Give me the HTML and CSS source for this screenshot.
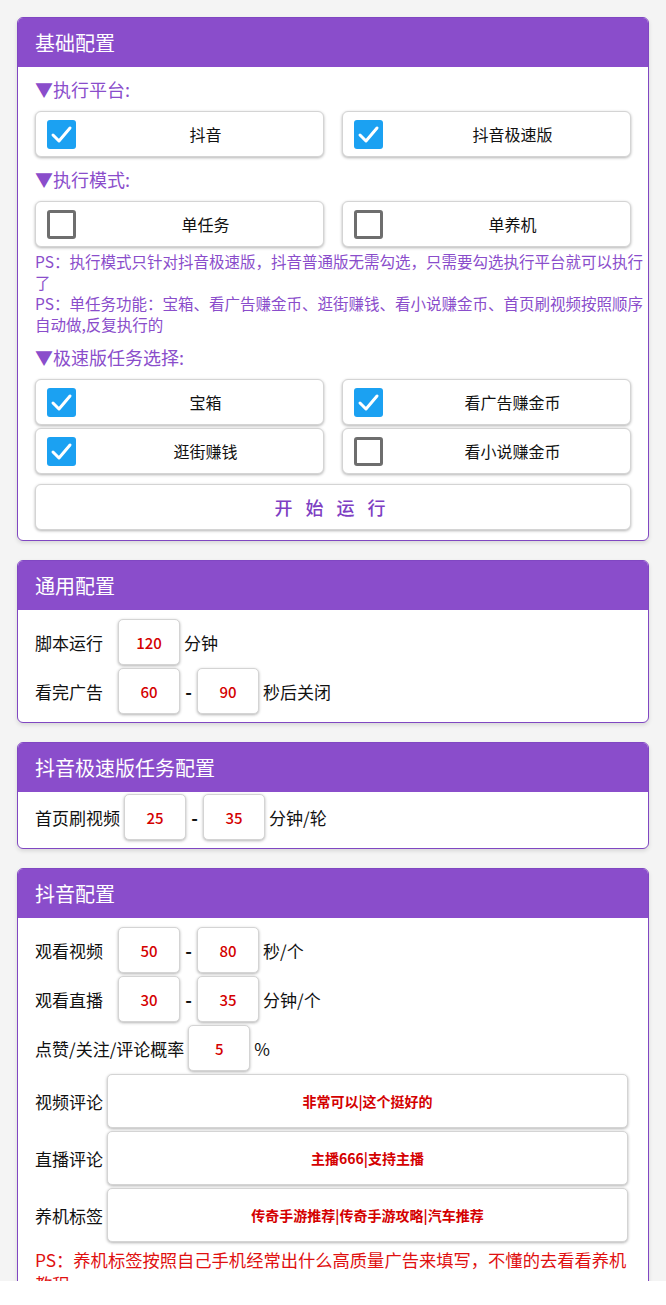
FILE: index.html
```html
<!DOCTYPE html>
<html lang="zh-CN">
<head>
  <meta charset="UTF-8">
  <title>配置</title>
  <link rel="stylesheet" href="styles.css">
</head>
<body>
<div class="page">

  <section class="card">
    <h2 class="card-head">基础配置</h2>
    <div class="card-body">
      <div class="group-title">▼执行平台:</div>
      <div class="check-grid">
        <label class="check-item"><span class="tick on"><svg viewBox="0 0 29 29"><polyline points="6,15 12,21 23,8"/></svg></span><span class="check-text">抖音</span></label>
        <label class="check-item"><span class="tick on"><svg viewBox="0 0 29 29"><polyline points="6,15 12,21 23,8"/></svg></span><span class="check-text">抖音极速版</span></label>
      </div>

      <div class="group-title">▼执行模式:</div>
      <div class="check-grid">
        <label class="check-item"><span class="tick"></span><span class="check-text">单任务</span></label>
        <label class="check-item"><span class="tick"></span><span class="check-text">单养机</span></label>
      </div>
      <p class="note">PS：执行模式只针对抖音极速版，抖音普通版无需勾选，只需要勾选执行平台就可以执行了</p>
      <p class="note">PS：单任务功能：宝箱、看广告赚金币、逛街赚钱、看小说赚金币、首页刷视频按照顺序自动做,反复执行的</p>

      <div class="group-title">▼极速版任务选择:</div>
      <div class="check-grid">
        <label class="check-item"><span class="tick on"><svg viewBox="0 0 29 29"><polyline points="6,15 12,21 23,8"/></svg></span><span class="check-text">宝箱</span></label>
        <label class="check-item"><span class="tick on"><svg viewBox="0 0 29 29"><polyline points="6,15 12,21 23,8"/></svg></span><span class="check-text">看广告赚金币</span></label>
        <label class="check-item"><span class="tick on"><svg viewBox="0 0 29 29"><polyline points="6,15 12,21 23,8"/></svg></span><span class="check-text">逛街赚钱</span></label>
        <label class="check-item"><span class="tick"></span><span class="check-text">看小说赚金币</span></label>
      </div>
      <button class="run-btn">开始运行</button>
    </div>
  </section>

  <section class="card">
    <h2 class="card-head">通用配置</h2>
    <div class="card-body rows">
      <div class="row">
        <span class="row-label fixed">脚本运行</span>
        <span class="num-box">120</span>
        <span class="unit">分钟</span>
      </div>
      <div class="row">
        <span class="row-label fixed">看完广告</span>
        <span class="num-box">60</span>
        <span class="dash">-</span>
        <span class="num-box">90</span>
        <span class="unit">秒后关闭</span>
      </div>
    </div>
  </section>

  <section class="card">
    <h2 class="card-head">抖音极速版任务配置</h2>
    <div class="card-body rows tight">
      <div class="row">
        <span class="row-label">首页刷视频</span>
        <span class="num-box">25</span>
        <span class="dash">-</span>
        <span class="num-box">35</span>
        <span class="unit">分钟/轮</span>
      </div>
    </div>
  </section>

  <section class="card">
    <h2 class="card-head">抖音配置</h2>
    <div class="card-body rows">
      <div class="row">
        <span class="row-label fixed">观看视频</span>
        <span class="num-box">50</span>
        <span class="dash">-</span>
        <span class="num-box">80</span>
        <span class="unit">秒/个</span>
      </div>
      <div class="row">
        <span class="row-label fixed">观看直播</span>
        <span class="num-box">30</span>
        <span class="dash">-</span>
        <span class="num-box">35</span>
        <span class="unit">分钟/个</span>
      </div>
      <div class="row">
        <span class="row-label">点赞/关注/评论概率</span>
        <span class="num-box">5</span>
        <span class="unit">%</span>
      </div>
      <div class="row">
        <span class="row-label">视频评论</span>
        <span class="text-box">非常可以|这个挺好的</span>
      </div>
      <div class="row">
        <span class="row-label">直播评论</span>
        <span class="text-box">主播666|支持主播</span>
      </div>
      <div class="row">
        <span class="row-label">养机标签</span>
        <span class="text-box">传奇手游推荐|传奇手游攻略|汽车推荐</span>
      </div>
      <p class="warn">PS：养机标签按照自己手机经常出什么高质量广告来填写，不懂的去看看养机教程</p>
    </div>
  </section>

</div>
</body>
</html>
```

FILE: styles.css
```css
html, body {
  margin: 0;
  background: #fff;
}
.page {
  height: 1281px;
  overflow: hidden;
  box-sizing: border-box;
  padding: 17px 17px 0;
  background: #f4f4f4;
  font-family: "Noto Sans CJK SC", "Noto Sans", sans-serif;
  color: #111;
}
.card {
  background: #fff;
  border: 1px solid #8047c2;
  border-radius: 6px;
  margin-bottom: 19px;
  overflow: hidden;
  box-shadow: 0 2px 4px rgba(0, 0, 0, 0.12);
}
.card-head {
  margin: 0;
  height: 49px;
  display: flex;
  align-items: center;
  padding-left: 17px;
  background: #8a4dcb;
  color: #fff;
  font-size: 20px;
  font-weight: normal;
}
.card-body {
  padding: 0 17px 10px;
}
.group-title {
  padding: 11px 0;
  line-height: 22px;
  font-size: 18px;
  color: #8a4dcb;
}
.check-grid {
  display: grid;
  grid-template-columns: 1fr 1fr;
  column-gap: 18px;
  row-gap: 3px;
}
.check-item {
  height: 46px;
  box-sizing: border-box;
  display: flex;
  align-items: center;
  padding-left: 11px;
  border: 1px solid #d4d4d4;
  border-radius: 6px;
  box-shadow: 0 1px 3px rgba(0, 0, 0, 0.3);
  background: #fff;
}
.tick {
  width: 29px;
  height: 29px;
  box-sizing: border-box;
  border: 3px solid #6e6e6e;
  border-radius: 3px;
  flex: none;
}
.tick.on {
  border: none;
  background: #1ba1f2;
}
.tick svg {
  display: block;
  width: 29px;
  height: 29px;
}
.tick polyline {
  fill: none;
  stroke: #fff;
  stroke-width: 3;
  stroke-linecap: round;
  stroke-linejoin: round;
}
.check-text {
  flex: 1;
  margin-left: 12px;
  text-align: center;
  font-size: 16px;
  color: #111;
}
.note {
  margin: 4px -16px 0 0;
  font-size: 15.5px;
  line-height: 21px;
  color: #8a4dcb;
}
.note + .note {
  margin-top: 0;
}
.run-btn {
  display: block;
  width: 100%;
  height: 46px;
  margin-top: 10px;
  border: 1px solid #d4d4d4;
  border-radius: 6px;
  background: #fff;
  box-shadow: 0 1px 3px rgba(0, 0, 0, 0.3);
  font-family: inherit;
  font-size: 18px;
  font-weight: 500;
  letter-spacing: 13px;
  padding-left: 13px;
  color: #7e3fc3;
}
.rows {
  display: flex;
  flex-direction: column;
  gap: 3px;
  padding-top: 9px;
  padding-bottom: 8px;
}
.rows.tight {
  padding-top: 2px;
  padding-bottom: 8px;
}
.row {
  display: flex;
  align-items: center;
}
.row-label {
  font-size: 17px;
  white-space: nowrap;
}
.row-label.fixed {
  min-width: 79px;
}
.num-box {
  width: 62px;
  height: 46px;
  box-sizing: border-box;
  margin: 0 4px;
  display: flex;
  align-items: center;
  justify-content: center;
  border: 1px solid #d4d4d4;
  border-radius: 5px;
  box-shadow: 0 1px 3px rgba(0, 0, 0, 0.3);
  background: #fff;
  color: #d40000;
  font-size: 15px;
  font-weight: 500;
}
.dash {
  width: 9px;
  text-align: center;
  font-size: 18px;
  font-weight: bold;
}
.unit {
  font-size: 17px;
}
.text-box {
  flex: 1;
  height: 54px;
  box-sizing: border-box;
  margin: 0 3px 0 4px;
  display: flex;
  align-items: center;
  justify-content: center;
  border: 1px solid #d4d4d4;
  border-radius: 5px;
  box-shadow: 0 1px 3px rgba(0, 0, 0, 0.3);
  background: #fff;
  color: #d40000;
  font-size: 14px;
  font-weight: bold;
}
.warn {
  margin: 3px 0 0;
  font-size: 17.3px;
  line-height: 24px;
  color: #e01010;
}
```
